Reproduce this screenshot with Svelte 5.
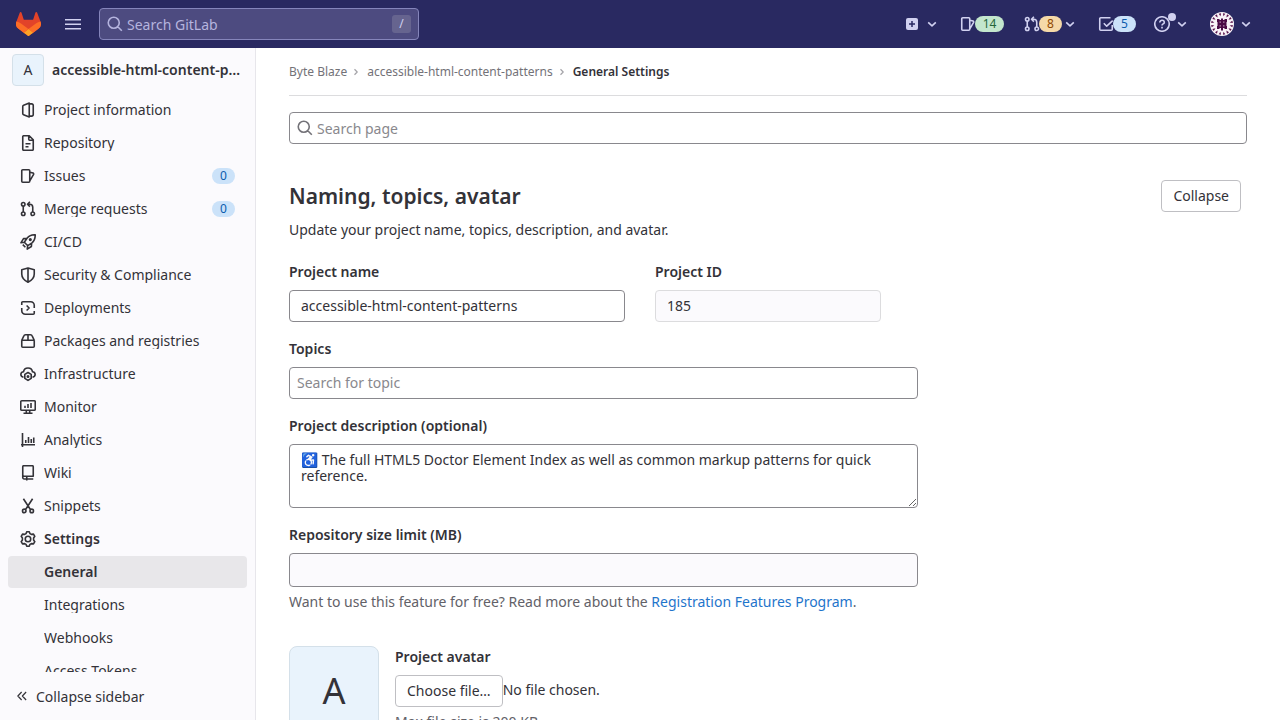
<script>
  const nav = [
    { icon: 'info', label: 'Project information' },
    { icon: 'doc', label: 'Repository' },
    { icon: 'issues', label: 'Issues', count: 0 },
    { icon: 'merge', label: 'Merge requests', count: 0 },
    { icon: 'rocket', label: 'CI/CD' },
    { icon: 'shield', label: 'Security & Compliance' },
    { icon: 'deploy', label: 'Deployments' },
    { icon: 'package', label: 'Packages and registries' },
    { icon: 'cloud', label: 'Infrastructure' },
    { icon: 'monitor', label: 'Monitor' },
    { icon: 'chart', label: 'Analytics' },
    { icon: 'book', label: 'Wiki' },
    { icon: 'snippet', label: 'Snippets' },
    { icon: 'gear', label: 'Settings', bold: true },
    { label: 'General', bold: true, active: true },
    { label: 'Integrations' },
    { label: 'Webhooks' },
    { label: 'Access Tokens' },
  ];
  const paths = {
    info: 'M9.25 1.1v13.8L3.6 12.7a1.3 1.3 0 0 1-.85-1.2v-7a1.3 1.3 0 0 1 .85-1.2zM9.25 1.9h2.5a1.5 1.5 0 0 1 1.5 1.5v9.2a1.5 1.5 0 0 1-1.5 1.5h-2.5',
    doc: 'M9.2.75H3.75a1 1 0 0 0-1 1v12.5a1 1 0 0 0 1 1h8.5a1 1 0 0 0 1-1V4.8zM8.75 1v3.25a1 1 0 0 0 1 1H13M5.5 8.75h5M5.5 11.75h3',
    issues: 'M2.75 1.75h6a1 1 0 0 1 1 1v10.5a1 1 0 0 1-1 1h-6a1 1 0 0 1-1-1V2.75a1 1 0 0 1 1-1M9.8 4.2l3.2.9a1 1 0 0 1 .6 1.3L9.8 12.8',
    merge: 'M3.25 5.2v5.6M12.75 10.8V6.2a3 3 0 0 0-3-3H8M9.9.8 7.5 3.2l2.4 2.4M5 3.25a1.75 1.75 0 1 1-3.5 0 1.75 1.75 0 0 1 3.5 0M5 12.75a1.75 1.75 0 1 1-3.5 0 1.75 1.75 0 0 1 3.5 0M14.5 12.75a1.75 1.75 0 1 1-3.5 0 1.75 1.75 0 0 1 3.5 0',
    rocket: 'M15.2.8c-3.5-.1-6 .8-8 3.2L4.3 8.2l3.5 3.5L12 8.8c2.4-2 3.3-4.5 3.2-8ZM6.8 4.4l-3.3.2L.9 8.8l3.4-.5M11.6 9.2l-.2 3.3-4.2 2.6.5-3.4M2.8 10.6l2.6 2.6M11.1 5.6a.8.8 0 1 1-1.6 0 .8.8 0 0 1 1.6 0',
    shield: 'M8 1 1.75 2.75V7c0 4 2.6 6.4 6.25 8.2C11.65 13.4 14.25 11 14.25 7V2.75zM8 1v14',
    deploy: 'M1.75 5V2.75a1 1 0 0 1 1-1h8a3.5 3.5 0 0 1 3.5 3.5V8M14.25 11v2.25a1 1 0 0 1-1 1h-8a3.5 3.5 0 0 1-3.5-3.5V8M6.6 5.5 9.1 8l-2.5 2.5',
    package: 'M1.75 7.25h12.5v6a1 1 0 0 1-1 1H2.75a1 1 0 0 1-1-1zM1.75 7.25l2-4.2a2 2 0 0 1 1.8-1.3h4.9a2 2 0 0 1 1.8 1.3l2 4.2M8 1.75v5.5',
    cloud: 'M3.5 11.3C-.2 10.5.2 6 3.5 5.8 4.4.7 11.6.7 12.5 5.8c3.3.2 3.7 4.7 0 5.5M8 6.5l3.2 1.9v3.9L8 14.4l-3.2-2.1V8.4zM8.7 10.4a.7.7 0 1 1-1.4 0 .7.7 0 0 1 1.4 0',
    monitor: 'M1.75 1.75h12.5a1 1 0 0 1 1 1v7.5a1 1 0 0 1-1 1H1.75a1 1 0 0 1-1-1v-7.5a1 1 0 0 1 1-1M5 6.8V9M8 5v4M11 4v5M6.3 11.3v2.9M9.7 11.3v2.9M3.5 14.25h9',
    chart: 'M2.5 1v14M1 12.75h14M5.75 8v3M8.5 5v6M11.25 7v4M13.75 5.5V11',
    book: 'M3.75.75h8.5a1 1 0 0 1 1 1v9.5h-9.5a1.7 1.7 0 0 0-1 .5V1.75a1 1 0 0 1 1-1M2.75 11.5c-.2 1.6.4 2.5 1.6 2.5h8.9M6.75 11.5V15.5',
    snippet: 'M3.4.8 10.4 11.5M12.6.8 5.6 11.5M6 12.9a1.75 1.75 0 1 1-3.5 0 1.75 1.75 0 0 1 3.5 0M13.5 12.9a1.75 1.75 0 1 1-3.5 0 1.75 1.75 0 0 1 3.5 0',
    gear: 'M6.8.75h2.4l.8 1.9 1.3.75 2.2-.3 1.3 2.2L13.6 7v2l1.2 1.7-1.3 2.2-2.2-.3-1.3.75-.8 1.9H6.8L6 13.35l-1.3-.75-2.2.3-1.3-2.2L2.4 9V7L1.2 5.3l1.3-2.2 2.2.3L6 2.65zM10.75 8a2.75 2.75 0 1 1-5.5 0 2.75 2.75 0 0 1 5.5 0',
    search: 'M12.25 6.75a5.5 5.5 0 1 1-11 0 5.5 5.5 0 0 1 11 0M10.8 10.8l4 4',
    todo: 'M12.5 1.75H2.75a1 1 0 0 0-1 1v10.5a1 1 0 0 0 1 1h10.5a1 1 0 0 0 1-1V9M5.8 7.3l2.9 2.9 6-5.5',
    help: 'M15.25 8A7.25 7.25 0 1 1 .75 8a7.25 7.25 0 0 1 14.5 0M5.8 6.4c0-2.9 4.5-2.7 4.5 0 0 1.6-2.3 1.5-2.3 3.1M8 10.8v1.6',
    down: 'm4.2 6.3 3.8 3.5 3.8-3.5',
    right: 'm6 4.3 3.6 3.7L6 11.7',
    left: 'M7.5 2.7 2.5 8l5 5.3M13.5 2.7 8.5 8l5 5.3',
  };
  const spokes = Array.from({ length: 16 }, (_, i) => i * 22.5);
</script>

{#snippet icon(name, size = 16)}
  <svg class="icon" width={size} height={size} viewBox="0 0 16 16"><path d={paths[name]} /></svg>
{/snippet}

<div class="page">
  <header>
    <svg class="logo" width="25" height="24" viewBox="0 0 25 24">
      <path d="m24.507 9.5-.034-.09L21.082.562a.896.896 0 0 0-1.694.091l-2.29 7.01H7.825L5.535.653a.898.898 0 0 0-1.694-.09L.451 9.411.416 9.5a6.297 6.297 0 0 0 2.09 7.278l.042.032 5.16 3.867 2.56 1.935 1.554 1.176a1.051 1.051 0 0 0 1.268 0l1.555-1.176 2.56-1.935 5.197-3.89.014-.01A6.297 6.297 0 0 0 24.507 9.5Z" fill="#e24329" />
      <path d="m24.507 9.5-.034-.09a11.44 11.44 0 0 0-4.56 2.051l-7.447 5.632 4.742 3.584 5.197-3.89.014-.01A6.297 6.297 0 0 0 24.507 9.5Z" fill="#fc6d26" />
      <path d="m7.707 20.677 2.56 1.935 1.555 1.176a1.051 1.051 0 0 0 1.268 0l1.555-1.176 2.56-1.935-4.743-3.584-4.755 3.584Z" fill="#fca326" />
      <path d="M5.01 11.461a11.43 11.43 0 0 0-4.56-2.05L.416 9.5a6.297 6.297 0 0 0 2.09 7.278l.042.032 5.16 3.867 4.745-3.584-7.444-5.632Z" fill="#fc6d26" />
    </svg>
    <svg class="burger" width="16" height="16" viewBox="0 0 16 16"><path d="M0 3.75h16M0 8.25h16M0 12.75h16" /></svg>
    <div class="search">{@render icon('search')}<span>Search GitLab</span><kbd>/</kbd></div>
    <div class="tools">
      <div class="tool plus">
        <svg width="12" height="12" viewBox="0 0 12 12"><rect width="12" height="12" rx="2" fill="#d1d1f0" /><path d="M6 3v6M3 6h6" stroke="#292961" stroke-width="1.5" /></svg>
        {@render icon('down')}
      </div>
      <div class="tool">{@render icon('issues')}<b class="green">14</b></div>
      <div class="tool">{@render icon('merge')}<b class="orange">8</b>{@render icon('down')}</div>
      <div class="tool">{@render icon('todo')}<b class="blue">5</b></div>
      <div class="tool help">{@render icon('help')}<i></i>{@render icon('down')}</div>
      <div class="tool user">
        <svg width="24" height="24" viewBox="0 0 24 24">
          <circle cx="12" cy="12" r="12" fill="#f8f2f7" />
          {#each spokes as a}<path d="M10.8 1.2h2.4L12 4.2z" transform="rotate({a + 11.25} 12 12)" fill="#581149" />{/each}
          <path d="M7 7h2.5v1H11V6.5h2V8h1.5V7H17v3h-.5v4h.5v3h-2.5v-1H13v2.5h-2V16H9.5v1H7v-3h.5v-4H7z" fill="#4b0a45" />
          <path d="M9.6 9.6h1.2v1.2H9.6zM13.2 9.6h1.2v1.2h-1.2zM9.6 13.2h1.2v1.2H9.6zM13.2 13.2h1.2v1.2h-1.2z" fill="#c5a6c2" />
        </svg>
        {@render icon('down')}
      </div>
    </div>
  </header>

  <div class="body">
    <aside>
      <div class="project"><div class="avatar">A</div><strong>accessible-html-content-patterns</strong></div>
      <nav>
        {#each nav as item}
          <div class="item" class:bold={item.bold} class:active={item.active}>
            <span class="slot">{#if item.icon}{@render icon(item.icon)}{/if}</span>
            <span class="label">{item.label}</span>
            {#if item.count !== undefined}<span class="count">{item.count}</span>{/if}
          </div>
        {/each}
      </nav>
      <div class="collapse">{@render icon('left', 12)}<span>Collapse sidebar</span></div>
    </aside>

    <main>
      <div class="crumbs">
        <span>Byte Blaze</span>{@render icon('right', 12)}<span>accessible-html-content-patterns</span>{@render icon('right', 12)}<strong>General Settings</strong>
      </div>
      <div class="field find">{@render icon('search')}<span>Search page</span></div>
      <div class="heading"><h4>Naming, topics, avatar</h4><button>Collapse</button></div>
      <p class="intro">Update your project name, topics, description, and avatar.</p>
      <div class="pair">
        <div class="name"><div class="lab">Project name</div><div class="field">accessible-html-content-patterns</div></div>
        <div class="pid"><div class="lab">Project ID</div><div class="field readonly">185</div></div>
      </div>
      <div class="lab">Topics</div>
      <div class="field wide topic">Search for topic</div>
      <div class="lab">Project description (optional)</div>
      <textarea class="wide">♿ The full HTML5 Doctor Element Index as well as common markup patterns for quick reference.</textarea>
      <div class="lab">Repository size limit (MB)</div>
      <div class="field wide limit"></div>
      <p class="hint">Want to use this feature for free? Read more about the <a href="#program">Registration Features Program</a>.</p>
      <div class="upload">
        <div class="bigavatar">A</div>
        <div>
          <div class="lab">Project avatar</div>
          <div class="choose"><button>Choose file…</button><span>No file chosen.</span></div>
          <div class="max">Max file size is 200 KB.</div>
        </div>
      </div>
    </main>
  </div>
</div>

<style>
  :global(body) { margin: 0; overflow: hidden; }
  .page, .page * { box-sizing: border-box; }
  .page { width: 1280px; height: 720px; overflow: hidden; display: flex; flex-direction: column; background: #fff; color: #333238; font: 14px/20px "Noto Sans", sans-serif; }
  svg { display: block; flex: none; }
  .icon { fill: none; stroke: currentColor; stroke-width: 1.6; stroke-linejoin: round; }
  header { height: 48px; flex: none; background: #292961; color: #d1d1f0; display: flex; align-items: center; padding-left: 16px; }
  .burger { margin-left: 24px; stroke: currentColor; stroke-width: 1.5; }
  .search { margin-left: 18px; width: 320px; height: 32px; border: 1px solid #8585bb; border-radius: 4px; background: #4d4b80; color: #b5b4de; display: flex; align-items: center; padding: 0 7px; }
  .search span { margin-left: 4px; flex: 1; padding-top: 1px; }
  kbd { width: 19px; height: 18px; border-radius: 3px; background: #66648f; color: #d1d1f0; font: 12px/17px "Noto Sans", sans-serif; text-align: center; }
  .tools { flex: 1; display: flex; align-items: center; gap: 20px; height: 48px; padding-left: 487px; }
  .tool { display: flex; align-items: center; flex: none; position: relative; }
  .tool b { width: 23px; height: 16px; border-radius: 8px; text-align: center; font: 12px/16px "Noto Sans", sans-serif; margin-left: -1px; }
  .tool .green { width: 29px; background: #c3e6cd; color: #24663b; }
  .orange { background: #f5d9a8; color: #8f4700; }
  .blue { background: #cbe2f9; color: #0b5cad; }
  .plus { gap: 6px; }
  .help { gap: 4px; margin-left: -2px; }
  .help i { position: absolute; left: 14px; top: -3px; width: 8px; height: 8px; border-radius: 4px; background: #d1d1f0; }
  .user { gap: 4px; }
  .body { display: flex; flex: 1; min-height: 0; }
  aside { width: 256px; flex: none; background: #fbfafd; border-right: 1px solid #e7e6eb; display: flex; flex-direction: column; }
  .project { height: 46px; flex: none; display: flex; align-items: center; padding: 0 14px 2px 12px; gap: 8px; }
  .project strong { overflow: hidden; text-overflow: ellipsis; white-space: nowrap; font-weight: 600; }
  .avatar { width: 32px; height: 32px; flex: none; border: 1px solid #d4e0e9; border-radius: 4px; background: #e9f3fc; text-align: center; line-height: 30px; }
  nav { flex: 1; min-height: 0; overflow: hidden; padding: 0 8px; }
  .item { height: 32px; margin-bottom: 1px; border-radius: 4px; padding: 0 12px; display: flex; align-items: center; }
  .slot { width: 16px; margin-right: 8px; }
  .label { flex: 1; line-height: 16px; overflow: hidden; white-space: nowrap; }
  .bold { font-weight: 600; }
  .active { background: #e8e7ea; }
  .count { width: 23px; height: 16px; border-radius: 8px; background: #cbe2f9; color: #0b5cad; font-size: 12px; line-height: 16px; text-align: center; }
  .collapse { height: 48px; flex: none; display: flex; align-items: center; padding-left: 16px; gap: 8px; }
  .collapse span { padding-top: 2px; }
  main { flex: 1; padding: 0 33px; overflow: hidden; }
  .crumbs { height: 48px; border-bottom: 1px solid #dcdcde; display: flex; align-items: center; font-size: 12px; color: #737278; margin-bottom: 16px; }
  .crumbs .icon { margin: 0 5px 0 3px; color: #a4a3a8; }
  .crumbs strong { font-weight: 600; color: #333238; }
  .field { height: 32px; border: 1px solid #89888d; border-radius: 4px; padding: 0 11px; line-height: 30px; background: #fff; }
  .find { display: flex; align-items: center; padding: 0 7px; gap: 4px; color: #89888d; }
  .find span { padding-top: 1px; }
  .find .icon { color: #737278; }
  .heading { display: flex; justify-content: space-between; margin-top: 36px; padding-right: 6px; height: 32px; align-items: center; }
  h4 { margin: 0; font-size: 21px; line-height: 28px; font-weight: 600; }
  button { height: 32px; padding: 0 11px; border: 1px solid #bfbfc3; border-radius: 4px; background: #fff; color: #333238; font: 14px/20px "Noto Sans", sans-serif; }
  p { margin: 0; }
  .intro { margin: 8px 0 22px; }
  .pair { display: flex; gap: 30px; margin-bottom: 17px; }
  .name { width: 336px; }
  .pid { width: 226px; }
  .lab { font-weight: 600; height: 20px; margin-bottom: 8px; }
  .readonly { background: #fbfafd; border-color: #dcdcde; }
  .wide { width: 629px; margin-bottom: 17px; }
  .topic { color: #89888d; padding: 0 7px; }
  textarea { display: block; height: 64px; border: 1px solid #89888d; border-radius: 4px; padding: 7px 11px; font: 14px/16px "Noto Sans", sans-serif; color: #333238; resize: vertical; }
  .limit { height: 34px; background: #fbfafd; margin-bottom: 5px; }
  .hint { color: #626168; }
  a { color: #1f75cb; text-decoration: none; }
  .upload { display: flex; gap: 16px; margin-top: 34px; }
  .bigavatar { width: 90px; height: 90px; flex: none; border: 1px solid #d4e0e9; border-radius: 8px; background: #e9f3fc; font-size: 36px; line-height: 88px; text-align: center; }
  .upload .lab { margin: 1px 0 8px; }
  .choose { display: flex; align-items: center; }
  .choose span { margin-bottom: 2px; }
  .max { color: #626168; margin-top: 5px; }
</style>
